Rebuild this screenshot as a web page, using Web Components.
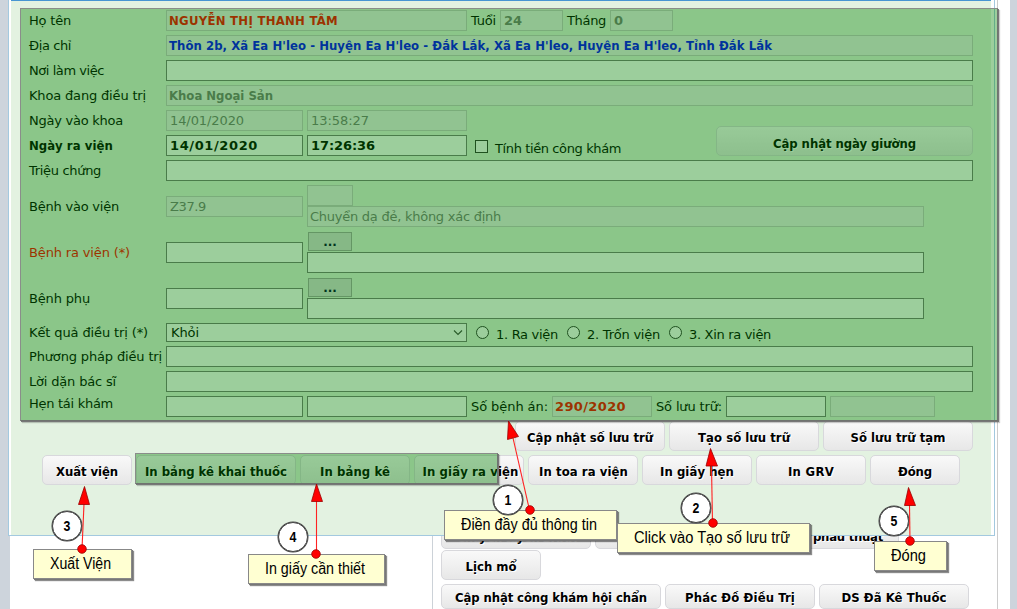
<!DOCTYPE html>
<html lang="vi">
<head>
<meta charset="utf-8">
<title>Xuất viện</title>
<style>
html, body { margin: 0; height: 100%; overflow: hidden; background: #fff; }
</style>
</head>
<body>
<hospital-page></hospital-page>

<template id="page">
<style>
:host { display: block; position: relative; width: 1017px; height: 609px; overflow: hidden; background: #cdd4dc; font: 13px "DejaVu Sans", Verdana, sans-serif; color: #000; }
.sheet { box-sizing: border-box; height: 609px; margin: 0 7px 0 10px; background: #fff; display: grid; grid-template-columns: 423px 565px 12px; }
.side { border-right: 1px solid #ccd2d8; box-sizing: border-box; }
.work { padding: 519px 0 0 8px; display: flex; flex-direction: column; border-right: 1px solid #ccc; box-sizing: border-box; }
.line { display: flex; gap: 4px; height: 31px; }
.line + .line + .line { margin-top: 3px; }
.low { height: 25px; padding-top: 1px; }
discharge-dialog { position: absolute; left: 8px; top: 0; }
annotation-layer { position: absolute; left: 0; top: 0; }
</style>
<div class="sheet">
  <div class="side"></div>
  <div class="work">
    <div class="line"><soft-button style="width:150px"><fit-text w="120" style="margin-top:2px">Chuyển tuyến BHXH</fit-text></soft-button><soft-button style="width:150px"></soft-button><soft-button style="width:150px;justify-content:flex-end"><fit-text w="70" style="margin:2px 15px 0 0">phẫu thuật</fit-text></soft-button></div>
    <div class="line"><soft-button style="width:100px"><fit-text w="51">Lịch mổ</fit-text></soft-button></div>
    <div class="line"><soft-button class="low" style="width:220px"><fit-text w="192">Cập nhật công khám hội chẩn</fit-text></soft-button><soft-button class="low" style="width:150px"><fit-text w="110">Phác Đồ Điều Trị</fit-text></soft-button><soft-button class="low" style="width:150px"><fit-text w="105">DS Đã Kê Thuốc</fit-text></soft-button></div>
  </div>
</div>
<discharge-dialog></discharge-dialog>
<annotation-layer></annotation-layer>
</template>

<template id="dialog">
<style>
:host { display: block; box-sizing: border-box; width: 987px; height: 536px; border: 1px solid #a3c9df; border-top: 0; background: #fff; padding: 0 3px 0 2px; }
.body { box-sizing: border-box; height: 535px; background: #e3f2e1; border-top: 1px solid #4795d2; padding: 7px 18px 0 18px; }
.row { display: grid; grid-template-columns: 137px 1fr; height: 25px; align-items: center; }
.tall { height: 46px; } .pick { height: 23px; }
.cells { display: flex; gap: 4px; align-items: center; }
.d { width: 137px; } .t { width: 160px; } .full { width: 807px; }
.stack { display: flex; flex-direction: column; align-items: flex-start; }
.more { box-sizing: border-box; width: 44px; height: 19px; border: 1px solid #a4a4a4; background: #dbdbdb; margin: 0 0 1px 1px; text-align: center; line-height: 19px; color: #003; font-weight: bold; font-size: 12px; }
.b { font-family: "DejaVu Sans Condensed", "DejaVu Sans"; font-stretch: condensed; font-weight: bold; }
.n { font-weight: bold; }
form-field .b { margin-left: -1px; }
.red { color: #f00; }
.select { box-sizing: border-box; width: 301px; height: 19px; border: 1px solid #777; background: #fff; display: flex; align-items: center; justify-content: space-between; padding: 0 3px 0 4px; }
.box { width: 11px; height: 11px; border: 1px solid #333; background: #fff; margin: 2px 3px 0 4px; }
.radio { width: 11px; height: 11px; border: 1px solid #333; background: #fff; border-radius: 50%; margin: 0 2px 0 0; }
.actions { display: flex; gap: 4px; justify-content: flex-end; margin-top: 2px; }
.actions + .actions { margin-top: 4px; padding-right: 13px; }
</style>
<div class="body">
  <div class="row"><fit-text w="42">Họ tên</fit-text><div class="cells"><form-field off style="width:301px"><fit-text class="b red" w="169">NGUYỄN THỊ THANH TÂM</fit-text></form-field><fit-text w="25">Tuổi</fit-text><form-field off style="width:63px"><fit-text class="n" w="18">24</fit-text></form-field><fit-text w="39">Tháng</fit-text><form-field off style="width:63px"><fit-text class="n" w="9">0</fit-text></form-field></div></div>
  <div class="row"><fit-text w="42">Địa chỉ</fit-text><form-field off class="full"><fit-text class="b" style="color:#00f" w="603">Thôn 2b, Xã Ea H'leo - Huyện Ea H'leo - Đắk Lắk, Xã Ea H'leo, Huyện Ea H'leo, Tỉnh Đắk Lắk</fit-text></form-field></div>
  <div class="row"><fit-text w="75">Nơi làm việc</fit-text><form-field class="full"></form-field></div>
  <div class="row"><fit-text w="117">Khoa đang điều trị</fit-text><form-field off class="full"><fit-text class="b" w="104">Khoa Ngoại Sản</fit-text></form-field></div>
  <div class="row"><fit-text w="94">Ngày vào khoa</fit-text><div class="cells"><form-field off class="d"><fit-text w="74">14/01/2020</fit-text></form-field><form-field off class="t"><fit-text w="58">13:58:27</fit-text></form-field></div></div>
  <div class="row"><fit-text class="b" w="84">Ngày ra viện</fit-text><div class="cells"><form-field class="d"><fit-text class="n" w="88">14/01/2020</fit-text></form-field><form-field class="t"><fit-text class="n" w="64">17:26:36</fit-text></form-field><span class="box"></span><fit-text w="126" style="margin-top:5px">Tính tiền công khám</fit-text><soft-button style="width:257px;margin:-9px 0 0 91px"><fit-text w="143" style="margin-top:3px">Cập nhật ngày giường</fit-text></soft-button></div></div>
  <div class="row"><fit-text w="72">Triệu chứng</fit-text><form-field class="full"></form-field></div>
  <div class="row tall"><fit-text w="90">Bệnh vào viện</fit-text><div class="cells"><form-field off class="d"><fit-text w="36">Z37.9</fit-text></form-field><div class="stack"><form-field off style="width:46px"></form-field><form-field off style="width:617px"><fit-text w="191" style="margin-left:-1px">Chuyển dạ đẻ, không xác định</fit-text></form-field></div></div></div>
  <div class="row tall"><fit-text class="red" w="101">Bệnh ra viện (*)</fit-text><div class="cells"><form-field class="d"></form-field><div class="stack"><span class="more">...</span><form-field style="width:617px"></form-field></div></div></div>
  <div class="row tall"><fit-text w="61">Bệnh phụ</fit-text><div class="cells"><form-field class="d"></form-field><div class="stack"><span class="more">...</span><form-field style="width:617px"></form-field></div></div></div>
  <div class="row pick"><fit-text w="119">Kết quả điều trị (*)</fit-text><div class="cells"><span class="select"><fit-text w="28">Khỏi</fit-text><svg width="10" height="7" viewBox="0 0 10 7"><path d="M1 1.5 5 5.5 9 1.5" fill="none" stroke="#444" stroke-width="1.1"/></svg></span><span class="radio" style="margin-left:5px"></span><fit-text w="62" style="margin:4px 0 0 1px">1. Ra viện</fit-text><span class="radio" style="margin-left:5px"></span><fit-text w="73" style="margin:4px 0 0 1px">2. Trốn viện</fit-text><span class="radio" style="margin-left:5px"></span><fit-text w="82" style="margin:4px 0 0 1px">3. Xin ra viện</fit-text></div></div>
  <div class="row"><fit-text w="133">Phương pháp điều trị</fit-text><form-field class="full"></form-field></div>
  <div class="row"><fit-text w="87">Lời dặn bác sĩ</fit-text><form-field class="full"></form-field></div>
  <div class="row"><fit-text w="84" style="margin-bottom:7px">Hẹn tái khám</fit-text><div class="cells"><form-field class="d"></form-field><form-field class="t"></form-field><fit-text w="77">Số bệnh án:</fit-text><form-field off style="width:100px"><fit-text class="n red" w="71" style="margin-left:-1px">290/2020</fit-text></form-field><fit-text w="66">Số lưu trữ:</fit-text><form-field style="width:100px"></form-field><form-field off style="width:105px"></form-field></div></div>
  <div class="actions"><soft-button style="width:150px"><fit-text w="126">Cập nhật số lưu trữ</fit-text></soft-button><soft-button style="width:150px"><fit-text w="92">Tạo số lưu trữ</fit-text></soft-button><soft-button style="width:150px"><fit-text w="95">Số lưu trữ tạm</fit-text></soft-button></div>
  <div class="actions"><soft-button style="width:90px"><fit-text w="62">Xuất viện</fit-text></soft-button><soft-button style="width:160px"><fit-text w="142">In bảng kê khai thuốc</fit-text></soft-button><soft-button style="width:110px"><fit-text w="70">In bảng kê</fit-text></soft-button><soft-button style="width:110px"><fit-text w="96" style="margin-left:3px">In giấy ra viện</fit-text></soft-button><soft-button style="width:110px"><fit-text w="89" style="margin-left:1px">In toa ra viện</fit-text></soft-button><soft-button style="width:110px"><fit-text w="74">In giấy hẹn</fit-text></soft-button><soft-button style="width:110px"><fit-text w="46">In GRV</fit-text></soft-button><soft-button style="width:90px"><fit-text w="34">Đóng</fit-text></soft-button></div>
</div>
</template>

<template id="annotations">
<style>
:host { display: block; width: 1017px; height: 609px; }
.mark, call-out, step-badge, svg { position: absolute; }
.mark { box-sizing: border-box; background: rgba(0,128,0,.39); border: 1px solid #8a8d8a; border-right-color: #6f736f; border-bottom-color: #6f736f; background-clip: padding-box; box-shadow: 1px 1px 0 #777, 2px 2px 1px rgba(0,0,0,.2); }
svg { left: 0; top: 0; }
</style>
<div class="mark" style="left:20px;top:8px;width:978px;height:413px"></div>
<div class="mark" style="left:135px;top:453px;width:363px;height:31px"></div>
<call-out style="left:444px;top:510px;width:173px"><fit-text squeeze w="136">Điền đầy đủ thông tin</fit-text></call-out>
<call-out style="left:617px;top:523px;width:193px"><fit-text squeeze w="156">Click vào Tạo số lưu trữ</fit-text></call-out>
<call-out style="left:33px;top:549px;width:99px"><fit-text squeeze w="61">Xuất Viện</fit-text></call-out>
<call-out style="left:248px;top:554px;width:137px"><fit-text squeeze w="100">In giấy cần thiết</fit-text></call-out>
<call-out style="left:874px;top:541px;width:73px"><fit-text squeeze w="35">Đóng</fit-text></call-out>
<step-badge style="left:493px;top:485px">1</step-badge>
<step-badge style="left:681px;top:493px">2</step-badge>
<step-badge style="left:52px;top:511px">3</step-badge>
<step-badge style="left:278px;top:522px">4</step-badge>
<step-badge style="left:879px;top:506px">5</step-badge>
<svg width="1017" height="609" viewBox="0 0 1017 609">
  <g fill="none" stroke="#f22" stroke-width="1.1">
    <path d="M529.5 510 513 438"/><path d="M712.5 523 711.5 466"/><path d="M82 549 84 504"/><path d="M316.5 554V501"/><path d="M910 541 909.5 505"/>
  </g>
  <g fill="#f00" stroke="#900" stroke-width=".8">
    <path d="M508.5 421 518.5 436.5 507.5 439.5z"/><path d="M710.5 448.5 717.500 466 706 466z"/><path d="M84.500 486.500 89.500 504.500 78.500 504.500z"/><path d="M316.500 484 322.500 501.500 311.500 501.500z"/><path d="M908.500 487.500 915.500 505.500 904.500 505.500z"/>
    <circle cx="530" cy="510" r="4.3"/><circle cx="713" cy="523" r="4.3"/><circle cx="82" cy="549" r="4.3"/><circle cx="316" cy="554" r="4.3"/><circle cx="910" cy="541" r="4.3"/>
  </g>
</svg>
</template>

<script>
class FitText extends HTMLElement {
  constructor() {
    super();
    this.attachShadow({ mode: 'open' }).innerHTML = '<style>:host{display:inline-block;white-space:nowrap;line-height:17px}span{display:inline-block;transform-origin:0 50%}</style><span><slot></slot></span>';
  }
  // Makes the label take its nominal width: by letter spacing, or by narrowing the glyphs if "squeeze" is set.
  connectedCallback() {
    const w = +this.getAttribute('w');
    const span = this.shadowRoot.querySelector('span');
    const natural = span.getBoundingClientRect().width;
    if (!w || !natural) return;
    if (this.hasAttribute('squeeze')) span.style.transform = `scaleX(${w / natural})`;
    else span.style.letterSpacing = ((w - natural) / this.textContent.length) + 'px';
    this.style.width = w + 'px';
    this.style.flex = 'none';
  }
}
class FormField extends HTMLElement {
  constructor() {
    super();
    this.attachShadow({ mode: 'open' }).innerHTML = '<style>:host{box-sizing:border-box;display:flex;flex:none;align-items:center;height:21px;border:1px solid #7a7a7a;background:#fff;padding:0 2px 0 3px}:host([off]){background:#eee;border-color:#c8c8c8;color:#7a7a7a}</style><slot></slot>';
  }
}
class SoftButton extends HTMLElement {
  constructor() {
    super();
    this.attachShadow({ mode: 'open' }).innerHTML = '<style>:host{box-sizing:border-box;display:flex;flex:none;align-items:center;justify-content:center;height:30px;border:1px solid #d8d8dc;border-radius:5px;background:linear-gradient(#f9f9f9,#e7e7e7);font-family:"DejaVu Sans Condensed","DejaVu Sans";font-stretch:condensed;font-weight:bold;padding-top:2px;text-shadow:1px 1px 0 #fff}</style><slot></slot>';
  }
}
class CallOut extends HTMLElement {
  constructor() {
    super();
    this.attachShadow({ mode: 'open' }).innerHTML = '<style>:host{box-sizing:border-box;display:flex;justify-content:center;height:30px;padding-top:5px;padding-right:4px;border:1px solid #888;background:#ffffd2;box-shadow:1px 1px 0 #777,2px 2px 1px rgba(0,0,0,.45);font-family:"Liberation Sans",Arial,sans-serif;font-size:16px}</style><slot></slot>';
  }
}
class StepBadge extends HTMLElement {
  constructor() {
    super();
    this.attachShadow({ mode: 'open' }).innerHTML = '<style>:host{box-sizing:border-box;display:block;width:30px;height:30px;border:1.5px solid #444;border-radius:50%;background:#fff;text-align:center;font:bold 14px/28px "Liberation Sans",Arial,sans-serif;box-shadow:0 0 0 .5px #444}span{display:inline-block;transform:scaleX(.88)}</style><span><slot></slot></span>';
  }
}
const fromTemplate = id => class extends HTMLElement {
  constructor() {
    super();
    this.attachShadow({ mode: 'open' }).append(document.getElementById(id).content.cloneNode(true));
  }
};
customElements.define('form-field', FormField);
customElements.define('soft-button', SoftButton);
customElements.define('call-out', CallOut);
customElements.define('step-badge', StepBadge);
customElements.define('discharge-dialog', fromTemplate('dialog'));
customElements.define('annotation-layer', fromTemplate('annotations'));
customElements.define('hospital-page', fromTemplate('page'));
customElements.define('fit-text', FitText);
</script>
</body>
</html>
